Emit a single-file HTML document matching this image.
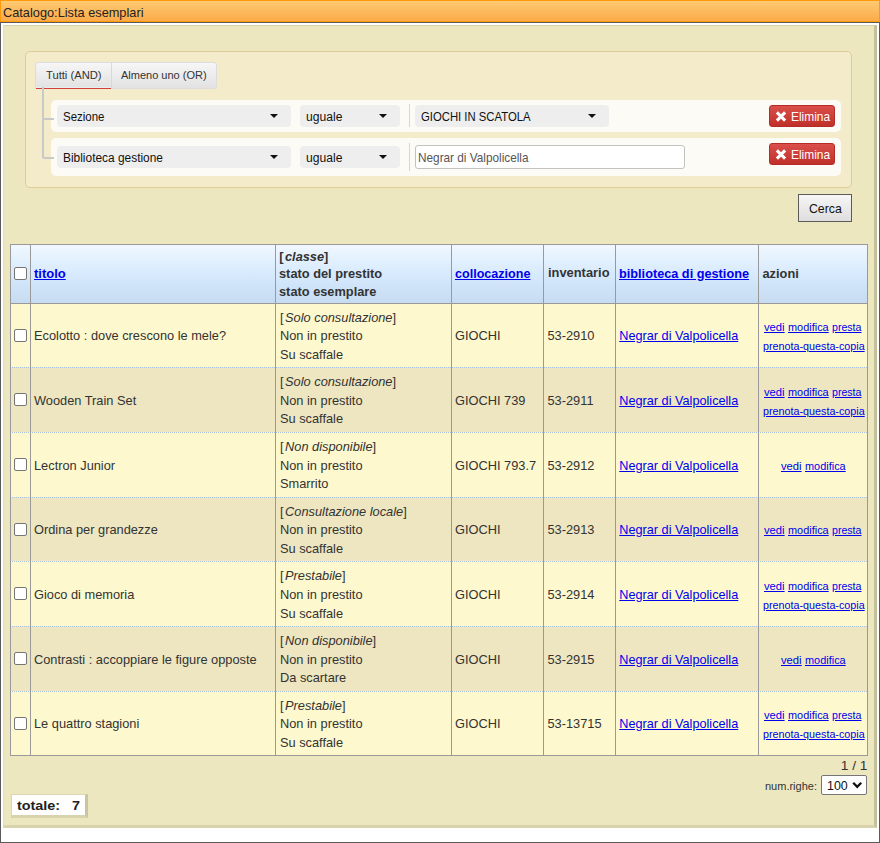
<!DOCTYPE html>
<html><head><meta charset="utf-8"><style>
html,body{margin:0;padding:0;width:880px;height:843px;overflow:hidden;background:#fff;}
body{position:relative;font-family:"Liberation Sans", sans-serif;}
div{font-family:"Liberation Sans", sans-serif;}
</style></head><body>
<div style="position:absolute;left:0px;top:0px;width:880px;height:22px;box-sizing:border-box;border:1px solid #fe9a0a;background:linear-gradient(#fdca73,#fcaa49);"></div>
<div style="position:absolute;top:5.06px;font-size:12.8px;line-height:15px;font-weight:400;color:#222;white-space:pre;left:2.7px;transform:scaleX(0.9975);transform-origin:left center;">Catalogo:Lista esemplari</div>
<div style="position:absolute;left:0px;top:22px;width:880px;height:821px;box-sizing:border-box;border:1px solid #5a5a5a;background:#fff;"></div>
<div style="position:absolute;left:3px;top:25px;width:874px;height:803px;box-sizing:border-box;border-style:solid;border-width:1px 3px 3px 1px;border-color:#d7d2aa #c3c09c #d8d3ad #e6dfb4;background:#ede7c0;"></div>
<div style="position:absolute;left:25px;top:51px;width:827px;height:137px;box-sizing:border-box;border:1px solid #dfcb98;border-radius:5px;background:#f3ebc9;"></div>
<div style="position:absolute;left:35px;top:62px;width:182px;height:27px;box-sizing:border-box;border:1px solid #dcdcdc;border-radius:3px;background:linear-gradient(#f6f6f6,#e2e2e2);"></div>
<div style="position:absolute;left:111px;top:62px;width:1px;height:27px;background:#d9d9d9;"></div>
<div style="position:absolute;left:36px;top:87px;width:75px;height:1px;background:#e6eef0;"></div>
<div style="position:absolute;left:36px;top:88px;width:75px;height:1px;background:#d43f3a;"></div>
<div style="position:absolute;top:68.69px;font-size:11px;line-height:13px;font-weight:400;color:#333;white-space:pre;left:46px;transform:scaleX(1.0169);transform-origin:left center;">Tutti (AND)</div>
<div style="position:absolute;top:68.69px;font-size:11px;line-height:13px;font-weight:400;color:#333;white-space:pre;left:121px;transform:scaleX(1.0001);transform-origin:left center;">Almeno uno (OR)</div>
<div style="position:absolute;left:51px;top:100px;width:790px;height:32px;border-radius:5px;background:#fdfbf6;"></div>
<div style="position:absolute;left:51px;top:138px;width:790px;height:38px;border-radius:5px;background:#fdfbf6;"></div>
<div style="position:absolute;left:42px;top:87px;width:2px;height:71px;background:#c9c9c7;"></div>
<div style="position:absolute;left:42px;top:118px;width:12px;height:2px;background:#c9c9c7;"></div>
<div style="position:absolute;left:42px;top:151px;width:12px;height:8px;box-sizing:border-box;border-left:2px solid #c9c9c7;border-bottom:2px solid #c9c9c7;border-bottom-left-radius:3px;"></div>
<div style="position:absolute;left:57px;top:105px;width:234px;height:22px;border-radius:4px;background:#eeeeee;"></div>
<div style="position:absolute;top:109.84px;font-size:12px;line-height:14px;font-weight:400;color:#111;white-space:pre;left:62.9px;transform:scaleX(0.9558);transform-origin:left center;">Sezione</div>
<div style="position:absolute;left:270px;top:114px;width:0;height:0;border-left:4px solid transparent;border-right:4px solid transparent;border-top:4px solid #111;"></div>
<div style="position:absolute;left:300px;top:105px;width:100px;height:22px;border-radius:4px;background:#eeeeee;"></div>
<div style="position:absolute;top:109.84px;font-size:12px;line-height:14px;font-weight:400;color:#111;white-space:pre;left:306px;transform:scaleX(1.0101);transform-origin:left center;">uguale</div>
<div style="position:absolute;left:379px;top:114px;width:0;height:0;border-left:4px solid transparent;border-right:4px solid transparent;border-top:4px solid #111;"></div>
<div style="position:absolute;left:409px;top:104px;width:1px;height:23px;background:#d8d6d0;"></div>
<div style="position:absolute;left:415px;top:105px;width:194px;height:22px;border-radius:4px;background:#eeeeee;"></div>
<div style="position:absolute;top:109.64px;font-size:12px;line-height:14px;font-weight:400;color:#111;white-space:pre;left:421.3px;transform:scaleX(0.9423);transform-origin:left center;">GIOCHI IN SCATOLA</div>
<div style="position:absolute;left:588px;top:114px;width:0;height:0;border-left:4px solid transparent;border-right:4px solid transparent;border-top:4px solid #111;"></div>
<div style="position:absolute;left:57px;top:146px;width:234px;height:22px;border-radius:4px;background:#eeeeee;"></div>
<div style="position:absolute;top:151.14px;font-size:12px;line-height:14px;font-weight:400;color:#111;white-space:pre;left:62.9px;transform:scaleX(0.9926);transform-origin:left center;">Biblioteca gestione</div>
<div style="position:absolute;left:270px;top:155px;width:0;height:0;border-left:4px solid transparent;border-right:4px solid transparent;border-top:4px solid #111;"></div>
<div style="position:absolute;left:300px;top:146px;width:100px;height:22px;border-radius:4px;background:#eeeeee;"></div>
<div style="position:absolute;top:150.74px;font-size:12px;line-height:14px;font-weight:400;color:#111;white-space:pre;left:306px;transform:scaleX(1.0101);transform-origin:left center;">uguale</div>
<div style="position:absolute;left:379px;top:155px;width:0;height:0;border-left:4px solid transparent;border-right:4px solid transparent;border-top:4px solid #111;"></div>
<div style="position:absolute;left:409px;top:143px;width:1px;height:28px;background:#d8d6d0;"></div>
<div style="position:absolute;left:415px;top:145px;width:270px;height:24px;box-sizing:border-box;border:1px solid #c2c2c2;border-radius:3px;background:#fff;"></div>
<div style="position:absolute;top:151.33px;font-size:12.6px;line-height:14px;font-weight:400;color:#555;white-space:pre;left:417.5px;transform:scaleX(0.9361);transform-origin:left center;">Negrar di Valpolicella</div>
<div style="position:absolute;left:769px;top:105px;width:66px;height:22px;box-sizing:border-box;border:1px solid #b52b27;border-radius:3px;background:linear-gradient(#da4f4a,#c0302b);"></div>
<svg style="position:absolute;left:775px;top:111px" width="12" height="11" viewBox="0 0 12 11"><path d="M1.9 1.4 L10.1 9.6 M10.1 1.4 L1.9 9.6" stroke="#fff" stroke-width="3.1" stroke-linecap="butt"/></svg>
<div style="position:absolute;top:109.70px;font-size:12.4px;line-height:14px;font-weight:400;color:#fff;white-space:pre;left:790.8px;transform:scaleX(0.9637);transform-origin:left center;">Elimina</div>
<div style="position:absolute;left:769px;top:143px;width:66px;height:22px;box-sizing:border-box;border:1px solid #b52b27;border-radius:3px;background:linear-gradient(#da4f4a,#c0302b);"></div>
<svg style="position:absolute;left:775px;top:149px" width="12" height="11" viewBox="0 0 12 11"><path d="M1.9 1.4 L10.1 9.6 M10.1 1.4 L1.9 9.6" stroke="#fff" stroke-width="3.1" stroke-linecap="butt"/></svg>
<div style="position:absolute;top:147.70px;font-size:12.4px;line-height:14px;font-weight:400;color:#fff;white-space:pre;left:790.8px;transform:scaleX(0.9637);transform-origin:left center;">Elimina</div>
<div style="position:absolute;left:798px;top:194px;width:54px;height:28px;box-sizing:border-box;border:1px solid #5b5b5b;background:linear-gradient(#f6f6f6,#dedede);"></div>
<div style="position:absolute;top:201.06px;font-size:12.8px;line-height:15px;font-weight:400;color:#111;white-space:pre;left:809.3px;transform:scaleX(0.9595);transform-origin:left center;">Cerca</div>
<div style="position:absolute;left:10px;top:244px;width:858px;height:60px;background:linear-gradient(#f1f8ff,#d6e9fd 52%,#c6dbf1);"></div>
<div style="position:absolute;left:10px;top:303px;width:858px;height:65px;background:#fdf8cd;"></div>
<div style="position:absolute;left:10px;top:367px;width:858px;height:66px;background:#ede6c0;"></div>
<div style="position:absolute;left:10px;top:432px;width:858px;height:66px;background:#fdf8cd;"></div>
<div style="position:absolute;left:10px;top:497px;width:858px;height:65px;background:#ede6c0;"></div>
<div style="position:absolute;left:10px;top:561px;width:858px;height:66px;background:#fdf8cd;"></div>
<div style="position:absolute;left:10px;top:626px;width:858px;height:66px;background:#ede6c0;"></div>
<div style="position:absolute;left:10px;top:691px;width:858px;height:65px;background:#fdf8cd;"></div>
<div style="position:absolute;left:10px;top:367px;width:858px;height:1px;background:repeating-linear-gradient(90deg,#a9c3de 0 1px,transparent 1px 2px);"></div>
<div style="position:absolute;left:10px;top:432px;width:858px;height:1px;background:repeating-linear-gradient(90deg,#a9c3de 0 1px,transparent 1px 2px);"></div>
<div style="position:absolute;left:10px;top:497px;width:858px;height:1px;background:repeating-linear-gradient(90deg,#a9c3de 0 1px,transparent 1px 2px);"></div>
<div style="position:absolute;left:10px;top:561px;width:858px;height:1px;background:repeating-linear-gradient(90deg,#a9c3de 0 1px,transparent 1px 2px);"></div>
<div style="position:absolute;left:10px;top:626px;width:858px;height:1px;background:repeating-linear-gradient(90deg,#a9c3de 0 1px,transparent 1px 2px);"></div>
<div style="position:absolute;left:10px;top:691px;width:858px;height:1px;background:repeating-linear-gradient(90deg,#a9c3de 0 1px,transparent 1px 2px);"></div>
<div style="position:absolute;left:10px;top:244px;width:858px;height:1px;background:#999;"></div>
<div style="position:absolute;left:10px;top:303px;width:858px;height:1px;background:#999;"></div>
<div style="position:absolute;left:10px;top:755px;width:858px;height:1px;background:#999;"></div>
<div style="position:absolute;left:10px;top:244px;width:1px;height:512px;background:#999;"></div>
<div style="position:absolute;left:30px;top:244px;width:1px;height:512px;background:#999;"></div>
<div style="position:absolute;left:275px;top:244px;width:1px;height:512px;background:#999;"></div>
<div style="position:absolute;left:451px;top:244px;width:1px;height:512px;background:#999;"></div>
<div style="position:absolute;left:543px;top:244px;width:1px;height:512px;background:#999;"></div>
<div style="position:absolute;left:615px;top:244px;width:1px;height:512px;background:#999;"></div>
<div style="position:absolute;left:758px;top:244px;width:1px;height:512px;background:#999;"></div>
<div style="position:absolute;left:867px;top:244px;width:1px;height:512px;background:#999;"></div>
<div style="position:absolute;left:14px;top:267px;width:13px;height:13px;box-sizing:border-box;border:1px solid #767676;border-radius:2px;background:#fff;"></div>
<div style="position:absolute;top:266.00px;font-size:13px;line-height:15px;font-weight:700;color:#0000ee;white-space:pre;left:34px;text-decoration:underline;">titolo</div>
<div style="position:absolute;top:249.46px;font-size:12.8px;line-height:15px;font-weight:700;color:#333;white-space:pre;left:279.2px;">[<i style="margin-left:1.5px">classe</i>]</div>
<div style="position:absolute;top:265.76px;font-size:12.8px;line-height:15px;font-weight:700;color:#333;white-space:pre;left:279px;">stato del prestito</div>
<div style="position:absolute;top:283.76px;font-size:12.8px;line-height:15px;font-weight:700;color:#333;white-space:pre;left:279px;">stato esemplare</div>
<div style="position:absolute;top:265.56px;font-size:12.8px;line-height:15px;font-weight:700;color:#0000ee;white-space:pre;left:455px;transform:scaleX(0.9827);transform-origin:left center;text-decoration:underline;">collocazione</div>
<div style="position:absolute;top:266.40px;font-size:12.7px;line-height:15px;font-weight:700;color:#333;white-space:pre;left:547.5px;transform:scaleX(1.0144);transform-origin:left center;">inventario</div>
<div style="position:absolute;top:265.56px;font-size:12.8px;line-height:15px;font-weight:700;color:#0000ee;white-space:pre;left:619.2px;transform:scaleX(0.9935);transform-origin:left center;text-decoration:underline;">biblioteca di gestione</div>
<div style="position:absolute;top:265.56px;font-size:12.8px;line-height:15px;font-weight:700;color:#333;white-space:pre;left:762.5px;">azioni</div>
<div style="position:absolute;left:14px;top:329px;width:13px;height:13px;box-sizing:border-box;border:1px solid #767676;border-radius:2px;background:#fff;"></div>
<div style="position:absolute;top:328.00px;font-size:12.8px;line-height:15px;font-weight:400;color:#333;white-space:pre;left:34px;">Ecolotto : dove crescono le mele?</div>
<div style="position:absolute;top:310.00px;font-size:12.8px;line-height:15px;font-weight:400;color:#333;white-space:pre;left:280px;">[<i style="margin-left:1.5px">Solo consultazione</i>]</div>
<div style="position:absolute;top:328.00px;font-size:12.8px;line-height:15px;font-weight:400;color:#333;white-space:pre;left:280px;">Non in prestito</div>
<div style="position:absolute;top:347.00px;font-size:12.8px;line-height:15px;font-weight:400;color:#333;white-space:pre;left:280px;">Su scaffale</div>
<div style="position:absolute;top:328.00px;font-size:12.8px;line-height:15px;font-weight:400;color:#333;white-space:pre;left:455px;">GIOCHI</div>
<div style="position:absolute;top:328.00px;font-size:12.8px;line-height:15px;font-weight:400;color:#333;white-space:pre;left:547.5px;">53-2910</div>
<div style="position:absolute;top:329.00px;font-size:12.7px;line-height:15px;font-weight:400;color:#0000ee;white-space:pre;left:619.3px;text-decoration:underline;">Negrar di Valpolicella</div>
<div style="position:absolute;top:321.00px;font-size:11px;line-height:13px;font-weight:400;color:#0000ee;white-space:pre;left:764px;transform:scaleX(1.0215);transform-origin:left center;text-decoration:underline;">vedi</div>
<div style="position:absolute;top:321.00px;font-size:11px;line-height:13px;font-weight:400;color:#0000ee;white-space:pre;left:788px;transform:scaleX(0.9933);transform-origin:left center;text-decoration:underline;">modifica</div>
<div style="position:absolute;top:321.00px;font-size:11px;line-height:13px;font-weight:400;color:#0000ee;white-space:pre;left:831.7px;transform:scaleX(0.9635);transform-origin:left center;text-decoration:underline;">presta</div>
<div style="position:absolute;top:340.00px;font-size:11px;line-height:13px;font-weight:400;color:#0000ee;white-space:pre;left:763px;transform:scaleX(0.9780);transform-origin:left center;text-decoration:underline;">prenota-questa-copia</div>
<div style="position:absolute;left:14px;top:393px;width:13px;height:13px;box-sizing:border-box;border:1px solid #767676;border-radius:2px;background:#fff;"></div>
<div style="position:absolute;top:393.00px;font-size:12.8px;line-height:15px;font-weight:400;color:#333;white-space:pre;left:34px;">Wooden Train Set</div>
<div style="position:absolute;top:374.00px;font-size:12.8px;line-height:15px;font-weight:400;color:#333;white-space:pre;left:280px;">[<i style="margin-left:1.5px">Solo consultazione</i>]</div>
<div style="position:absolute;top:393.00px;font-size:12.8px;line-height:15px;font-weight:400;color:#333;white-space:pre;left:280px;">Non in prestito</div>
<div style="position:absolute;top:411.00px;font-size:12.8px;line-height:15px;font-weight:400;color:#333;white-space:pre;left:280px;">Su scaffale</div>
<div style="position:absolute;top:393.00px;font-size:12.8px;line-height:15px;font-weight:400;color:#333;white-space:pre;left:455px;">GIOCHI 739</div>
<div style="position:absolute;top:393.00px;font-size:12.8px;line-height:15px;font-weight:400;color:#333;white-space:pre;left:547.5px;">53-2911</div>
<div style="position:absolute;top:394.00px;font-size:12.7px;line-height:15px;font-weight:400;color:#0000ee;white-space:pre;left:619.3px;text-decoration:underline;">Negrar di Valpolicella</div>
<div style="position:absolute;top:386.00px;font-size:11px;line-height:13px;font-weight:400;color:#0000ee;white-space:pre;left:764px;transform:scaleX(1.0215);transform-origin:left center;text-decoration:underline;">vedi</div>
<div style="position:absolute;top:386.00px;font-size:11px;line-height:13px;font-weight:400;color:#0000ee;white-space:pre;left:788px;transform:scaleX(0.9933);transform-origin:left center;text-decoration:underline;">modifica</div>
<div style="position:absolute;top:386.00px;font-size:11px;line-height:13px;font-weight:400;color:#0000ee;white-space:pre;left:831.7px;transform:scaleX(0.9635);transform-origin:left center;text-decoration:underline;">presta</div>
<div style="position:absolute;top:405.00px;font-size:11px;line-height:13px;font-weight:400;color:#0000ee;white-space:pre;left:763px;transform:scaleX(0.9780);transform-origin:left center;text-decoration:underline;">prenota-questa-copia</div>
<div style="position:absolute;left:14px;top:458px;width:13px;height:13px;box-sizing:border-box;border:1px solid #767676;border-radius:2px;background:#fff;"></div>
<div style="position:absolute;top:458.00px;font-size:12.8px;line-height:15px;font-weight:400;color:#333;white-space:pre;left:34px;">Lectron Junior</div>
<div style="position:absolute;top:439.00px;font-size:12.8px;line-height:15px;font-weight:400;color:#333;white-space:pre;left:280px;">[<i style="margin-left:1.5px">Non disponibile</i>]</div>
<div style="position:absolute;top:458.00px;font-size:12.8px;line-height:15px;font-weight:400;color:#333;white-space:pre;left:280px;">Non in prestito</div>
<div style="position:absolute;top:476.00px;font-size:12.8px;line-height:15px;font-weight:400;color:#333;white-space:pre;left:280px;">Smarrito</div>
<div style="position:absolute;top:458.00px;font-size:12.8px;line-height:15px;font-weight:400;color:#333;white-space:pre;left:455px;">GIOCHI 793.7</div>
<div style="position:absolute;top:458.00px;font-size:12.8px;line-height:15px;font-weight:400;color:#333;white-space:pre;left:547.5px;">53-2912</div>
<div style="position:absolute;top:459.00px;font-size:12.7px;line-height:15px;font-weight:400;color:#0000ee;white-space:pre;left:619.3px;text-decoration:underline;">Negrar di Valpolicella</div>
<div style="position:absolute;top:460.00px;font-size:11px;line-height:13px;font-weight:400;color:#0000ee;white-space:pre;left:781px;transform:scaleX(1.0215);transform-origin:left center;text-decoration:underline;">vedi</div>
<div style="position:absolute;top:460.00px;font-size:11px;line-height:13px;font-weight:400;color:#0000ee;white-space:pre;left:805px;transform:scaleX(0.9933);transform-origin:left center;text-decoration:underline;">modifica</div>
<div style="position:absolute;left:14px;top:523px;width:13px;height:13px;box-sizing:border-box;border:1px solid #767676;border-radius:2px;background:#fff;"></div>
<div style="position:absolute;top:522.00px;font-size:12.8px;line-height:15px;font-weight:400;color:#333;white-space:pre;left:34px;">Ordina per grandezze</div>
<div style="position:absolute;top:504.00px;font-size:12.8px;line-height:15px;font-weight:400;color:#333;white-space:pre;left:280px;">[<i style="margin-left:1.5px">Consultazione locale</i>]</div>
<div style="position:absolute;top:522.00px;font-size:12.8px;line-height:15px;font-weight:400;color:#333;white-space:pre;left:280px;">Non in prestito</div>
<div style="position:absolute;top:541.00px;font-size:12.8px;line-height:15px;font-weight:400;color:#333;white-space:pre;left:280px;">Su scaffale</div>
<div style="position:absolute;top:522.00px;font-size:12.8px;line-height:15px;font-weight:400;color:#333;white-space:pre;left:455px;">GIOCHI</div>
<div style="position:absolute;top:522.00px;font-size:12.8px;line-height:15px;font-weight:400;color:#333;white-space:pre;left:547.5px;">53-2913</div>
<div style="position:absolute;top:523.00px;font-size:12.7px;line-height:15px;font-weight:400;color:#0000ee;white-space:pre;left:619.3px;text-decoration:underline;">Negrar di Valpolicella</div>
<div style="position:absolute;top:524.00px;font-size:11px;line-height:13px;font-weight:400;color:#0000ee;white-space:pre;left:764px;transform:scaleX(1.0215);transform-origin:left center;text-decoration:underline;">vedi</div>
<div style="position:absolute;top:524.00px;font-size:11px;line-height:13px;font-weight:400;color:#0000ee;white-space:pre;left:788px;transform:scaleX(0.9933);transform-origin:left center;text-decoration:underline;">modifica</div>
<div style="position:absolute;top:524.00px;font-size:11px;line-height:13px;font-weight:400;color:#0000ee;white-space:pre;left:831.7px;transform:scaleX(0.9635);transform-origin:left center;text-decoration:underline;">presta</div>
<div style="position:absolute;left:14px;top:587px;width:13px;height:13px;box-sizing:border-box;border:1px solid #767676;border-radius:2px;background:#fff;"></div>
<div style="position:absolute;top:587.00px;font-size:12.8px;line-height:15px;font-weight:400;color:#333;white-space:pre;left:34px;">Gioco di memoria</div>
<div style="position:absolute;top:568.00px;font-size:12.8px;line-height:15px;font-weight:400;color:#333;white-space:pre;left:280px;">[<i style="margin-left:1.5px">Prestabile</i>]</div>
<div style="position:absolute;top:587.00px;font-size:12.8px;line-height:15px;font-weight:400;color:#333;white-space:pre;left:280px;">Non in prestito</div>
<div style="position:absolute;top:606.00px;font-size:12.8px;line-height:15px;font-weight:400;color:#333;white-space:pre;left:280px;">Su scaffale</div>
<div style="position:absolute;top:587.00px;font-size:12.8px;line-height:15px;font-weight:400;color:#333;white-space:pre;left:455px;">GIOCHI</div>
<div style="position:absolute;top:587.00px;font-size:12.8px;line-height:15px;font-weight:400;color:#333;white-space:pre;left:547.5px;">53-2914</div>
<div style="position:absolute;top:588.00px;font-size:12.7px;line-height:15px;font-weight:400;color:#0000ee;white-space:pre;left:619.3px;text-decoration:underline;">Negrar di Valpolicella</div>
<div style="position:absolute;top:580.00px;font-size:11px;line-height:13px;font-weight:400;color:#0000ee;white-space:pre;left:764px;transform:scaleX(1.0215);transform-origin:left center;text-decoration:underline;">vedi</div>
<div style="position:absolute;top:580.00px;font-size:11px;line-height:13px;font-weight:400;color:#0000ee;white-space:pre;left:788px;transform:scaleX(0.9933);transform-origin:left center;text-decoration:underline;">modifica</div>
<div style="position:absolute;top:580.00px;font-size:11px;line-height:13px;font-weight:400;color:#0000ee;white-space:pre;left:831.7px;transform:scaleX(0.9635);transform-origin:left center;text-decoration:underline;">presta</div>
<div style="position:absolute;top:599.00px;font-size:11px;line-height:13px;font-weight:400;color:#0000ee;white-space:pre;left:763px;transform:scaleX(0.9780);transform-origin:left center;text-decoration:underline;">prenota-questa-copia</div>
<div style="position:absolute;left:14px;top:652px;width:13px;height:13px;box-sizing:border-box;border:1px solid #767676;border-radius:2px;background:#fff;"></div>
<div style="position:absolute;top:652.00px;font-size:12.8px;line-height:15px;font-weight:400;color:#333;white-space:pre;left:34px;">Contrasti : accoppiare le figure opposte</div>
<div style="position:absolute;top:633.00px;font-size:12.8px;line-height:15px;font-weight:400;color:#333;white-space:pre;left:280px;">[<i style="margin-left:1.5px">Non disponibile</i>]</div>
<div style="position:absolute;top:652.00px;font-size:12.8px;line-height:15px;font-weight:400;color:#333;white-space:pre;left:280px;">Non in prestito</div>
<div style="position:absolute;top:670.00px;font-size:12.8px;line-height:15px;font-weight:400;color:#333;white-space:pre;left:280px;">Da scartare</div>
<div style="position:absolute;top:652.00px;font-size:12.8px;line-height:15px;font-weight:400;color:#333;white-space:pre;left:455px;">GIOCHI</div>
<div style="position:absolute;top:652.00px;font-size:12.8px;line-height:15px;font-weight:400;color:#333;white-space:pre;left:547.5px;">53-2915</div>
<div style="position:absolute;top:653.00px;font-size:12.7px;line-height:15px;font-weight:400;color:#0000ee;white-space:pre;left:619.3px;text-decoration:underline;">Negrar di Valpolicella</div>
<div style="position:absolute;top:654.00px;font-size:11px;line-height:13px;font-weight:400;color:#0000ee;white-space:pre;left:781px;transform:scaleX(1.0215);transform-origin:left center;text-decoration:underline;">vedi</div>
<div style="position:absolute;top:654.00px;font-size:11px;line-height:13px;font-weight:400;color:#0000ee;white-space:pre;left:805px;transform:scaleX(0.9933);transform-origin:left center;text-decoration:underline;">modifica</div>
<div style="position:absolute;left:14px;top:717px;width:13px;height:13px;box-sizing:border-box;border:1px solid #767676;border-radius:2px;background:#fff;"></div>
<div style="position:absolute;top:716.00px;font-size:12.8px;line-height:15px;font-weight:400;color:#333;white-space:pre;left:34px;">Le quattro stagioni</div>
<div style="position:absolute;top:698.00px;font-size:12.8px;line-height:15px;font-weight:400;color:#333;white-space:pre;left:280px;">[<i style="margin-left:1.5px">Prestabile</i>]</div>
<div style="position:absolute;top:716.00px;font-size:12.8px;line-height:15px;font-weight:400;color:#333;white-space:pre;left:280px;">Non in prestito</div>
<div style="position:absolute;top:735.00px;font-size:12.8px;line-height:15px;font-weight:400;color:#333;white-space:pre;left:280px;">Su scaffale</div>
<div style="position:absolute;top:716.00px;font-size:12.8px;line-height:15px;font-weight:400;color:#333;white-space:pre;left:455px;">GIOCHI</div>
<div style="position:absolute;top:716.00px;font-size:12.8px;line-height:15px;font-weight:400;color:#333;white-space:pre;left:547.5px;">53-13715</div>
<div style="position:absolute;top:717.00px;font-size:12.7px;line-height:15px;font-weight:400;color:#0000ee;white-space:pre;left:619.3px;text-decoration:underline;">Negrar di Valpolicella</div>
<div style="position:absolute;top:709.00px;font-size:11px;line-height:13px;font-weight:400;color:#0000ee;white-space:pre;left:764px;transform:scaleX(1.0215);transform-origin:left center;text-decoration:underline;">vedi</div>
<div style="position:absolute;top:709.00px;font-size:11px;line-height:13px;font-weight:400;color:#0000ee;white-space:pre;left:788px;transform:scaleX(0.9933);transform-origin:left center;text-decoration:underline;">modifica</div>
<div style="position:absolute;top:709.00px;font-size:11px;line-height:13px;font-weight:400;color:#0000ee;white-space:pre;left:831.7px;transform:scaleX(0.9635);transform-origin:left center;text-decoration:underline;">presta</div>
<div style="position:absolute;top:728.00px;font-size:11px;line-height:13px;font-weight:400;color:#0000ee;white-space:pre;left:763px;transform:scaleX(0.9780);transform-origin:left center;text-decoration:underline;">prenota-questa-copia</div>
<div style="position:absolute;top:758.84px;font-size:12px;line-height:14px;font-weight:400;color:#333;white-space:pre;right:13px;transform:scaleX(1.1405);transform-origin:right center;">1 / 1</div>
<div style="position:absolute;top:779.89px;font-size:11px;line-height:13px;font-weight:400;color:#333;white-space:pre;left:765px;">num.righe:</div>
<div style="position:absolute;left:821px;top:775px;width:46px;height:20px;box-sizing:border-box;border:1px solid #767676;border-radius:2px;background:#fff;"></div>
<div style="position:absolute;top:778.70px;font-size:12.4px;line-height:14px;font-weight:400;color:#111;white-space:pre;left:827px;transform:scaleX(1.0006);transform-origin:left center;">100</div>
<svg style="position:absolute;left:852px;top:781px" width="11" height="8" viewBox="0 0 11 8"><path d="M1.2 1.8 L5.2 5.8 L9.2 1.8" fill="none" stroke="#111" stroke-width="2.3"/></svg>
<div style="position:absolute;left:11px;top:794px;width:77px;height:24px;box-sizing:border-box;border-style:solid;border-width:1px 3px 3px 1px;border-color:#dcd7b0 #c9c5a0 #d8d3ad #dcd7b0;background:#fff;"></div>
<div style="position:absolute;top:797.73px;font-size:13.2px;line-height:15px;font-weight:700;color:#222;white-space:pre;left:17px;transform:scaleX(1.0898);transform-origin:left center;">totale:   7</div>
</body></html>
